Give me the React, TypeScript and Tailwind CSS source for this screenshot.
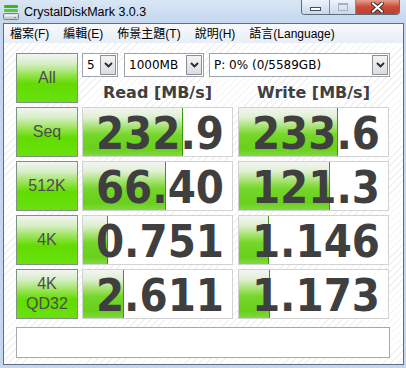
import React from 'react';

type Row = { label: string[]; read: string; write: string; rw: number; ww: number };

const rows: Row[] = [
  { label: ['Seq'], read: '232.9', write: '233.6', rw: 100, ww: 99 },
  { label: ['512K'], read: '66.40', write: '121.3', rw: 83, ww: 91 },
  { label: ['4K'], read: '0.751', write: '1.146', rw: 25, ww: 30 },
  { label: ['4K', 'QD32'], read: '2.611', write: '1.173', rw: 41, ww: 31 },
];

const menu = ['檔案(F)', '編輯(E)', '佈景主題(T)', '說明(H)', '語言(Language)'];

function AppIcon() {
  return (
    <svg width="16" height="16" viewBox="0 0 16 16">
      <rect x="1" y="1" width="14" height="3" rx="1" fill="#3cb81c" />
      <rect x="1" y="5" width="14" height="3" rx="1" fill="#56cf2a" />
      <rect x="0.5" y="9.5" width="15" height="6" rx="1" fill="#c9ccd0" stroke="#7b8088" />
      <rect x="1.5" y="10.5" width="13" height="2" fill="#eef0f2" />
      <rect x="11" y="13" width="2" height="1" fill="#37c21a" />
    </svg>
  );
}

function Chevron() {
  return (
    <svg width="9" height="6" viewBox="0 0 9 6">
      <path d="M1 1 L4.5 4.5 L8 1" fill="none" stroke="#1e2a3a" strokeWidth="1.8" />
    </svg>
  );
}

function Select({ value, w }: { value: string; w: string }) {
  return (
    <div className={`${w} h-[24px] bg-white border border-[#9ba3ad] flex items-center`}>
      <span className="flex-1 pl-[4px] text-[12px] text-black font-['DejaVu_Sans',sans-serif] leading-none whitespace-nowrap">
        {value}
      </span>
      <div className="w-[16px] h-[20px] mr-[1px] border border-[#8b9098] bg-[linear-gradient(to_bottom,#f4f4f4,#dcdcdc)] flex items-center justify-center">
        <Chevron />
      </div>
    </div>
  );
}

function GreenButton({ lines }: { lines: string[] }) {
  return (
    <div className="w-[62px] h-[50px] shrink-0 border border-[#80937f] bg-[linear-gradient(to_bottom,#f3f5f1_0%,#d8eec8_20%,#8ee244_46%,#62dc00_62%,#6ae110_100%)] flex flex-col items-center justify-center text-[#4d4d4d] font-['Liberation_Sans',sans-serif] leading-[20px]">
      {lines.map((l) => (
        <span key={l} className="text-[16px]">
          {l}
        </span>
      ))}
    </div>
  );
}

function ResultBox({ value, fill }: { value: string; fill: number }) {
  return (
    <div className="relative w-[151px] h-[50px] shrink-0 bg-white border border-[#d2d2d2]">
      <div
        className="absolute left-0 top-0 bottom-0 border-r border-[#3a9a0c] bg-[linear-gradient(to_bottom,#f4f5f3_0%,#dff0d2_20%,#9ee063_42%,#74d62a_56%,#68d01a_85%,#80da40_100%)]"
        style={{ width: fill }}
      />
      <div className="relative h-full flex items-end justify-end pr-[8px] pb-[2px] text-[45px] font-bold leading-[40px] text-[#3f3f3f] font-['DejaVu_Sans_Condensed','DejaVu_Sans',sans-serif]">
        {value}
      </div>
    </div>
  );
}

export default function App() {
  return (
    <div className="w-[406px] h-[368px] bg-[#c4d7ee] flex flex-col overflow-hidden">
      {/* Title bar */}
      <div className="h-[23px] shrink-0 flex justify-between bg-[linear-gradient(to_bottom,#d9e6f5,#c4d7ee)]">
        <div className="flex items-center pl-[3px] gap-[5px] pt-[1px]">
          <AppIcon />
          <span className="text-[12.5px] text-black font-['Liberation_Sans',sans-serif]">CrystalDiskMark 3.0.3</span>
        </div>
        <div className="flex h-[15px] mr-[6px] border border-t-0 border-[#5d6c80] rounded-b-[4px] overflow-hidden">
          <div className="w-[28px] border-r border-[#7d8ca0] bg-[linear-gradient(to_bottom,#eef3fa,#c9d8ea)] flex items-end justify-center pb-[3px]">
            <div className="w-[11px] h-[4px] bg-white border border-[#46505c]" />
          </div>
          <div className="w-[26px] border-r border-[#7d8ca0] bg-[linear-gradient(to_bottom,#eef3fa,#c9d8ea)] flex items-center justify-center">
            <div className="w-[10px] h-[8px] border border-[#a6b1be] border-t-2" />
          </div>
          <div className="w-[43px] bg-[linear-gradient(to_bottom,#e3a08f,#c94a36_50%,#c2412c)] flex items-center justify-center">
            <svg width="13" height="11" viewBox="0 0 13 11">
              <path d="M2 1.5 L11 9.5 M11 1.5 L2 9.5" stroke="#3c2a28" strokeWidth="4" strokeLinecap="round" />
              <path d="M2 1.5 L11 9.5 M11 1.5 L2 9.5" stroke="#ffffff" strokeWidth="2.2" strokeLinecap="round" />
            </svg>
          </div>
        </div>
      </div>

      {/* Window body */}
      <div className="flex-1 flex flex-col ml-[3px] mr-[2px] mb-[3px] border border-[#5f6d82]">
        {/* Menu */}
        <div className="h-[19px] shrink-0 flex items-center gap-[14px] pl-[6px] bg-[linear-gradient(to_bottom,#f7f9fc,#e8eef6)] text-[12px] text-black font-['Liberation_Sans','Noto_Sans_CJK_TC',sans-serif]">
          {menu.map((m) => (
            <span key={m}>{m}</span>
          ))}
        </div>

        {/* Client area */}
        <div className="flex-1 pl-[12px] pt-[10px] flex flex-col gap-[4px] bg-white bg-[repeating-linear-gradient(135deg,#ffffff_0px,#ffffff_4px,#f1f1f1_4px,#f1f1f1_5px)]">
          <div className="flex">
            <GreenButton lines={['All']} />
            <div className="ml-[4px] flex flex-col">
              <div className="flex">
                <Select value="5" w="w-[36px]" />
                <div className="ml-[6px]">
                  <Select value="1000MB" w="w-[80px]" />
                </div>
                <div className="ml-[5px]">
                  <Select value="P: 0% (0/5589GB)" w="w-[181px]" />
                </div>
              </div>
              <div className="h-[26px] pt-[5px] flex gap-[5px] items-center text-[16px] font-bold text-[#404040] font-['DejaVu_Sans',sans-serif]">
                <div className="w-[151px] text-center">Read [MB/s]</div>
                <div className="w-[151px] text-center">Write [MB/s]</div>
              </div>
            </div>
          </div>

          {rows.map((r) => (
            <div key={r.read} className="flex">
              <GreenButton lines={r.label} />
              <div className="ml-[4px]">
                <ResultBox value={r.read} fill={r.rw} />
              </div>
              <div className="ml-[5px]">
                <ResultBox value={r.write} fill={r.ww} />
              </div>
            </div>
          ))}

          <div className="mt-[4px] w-[374px] h-[31px] bg-white border border-[#a9a9a9]" />
        </div>
      </div>
    </div>
  );
}
